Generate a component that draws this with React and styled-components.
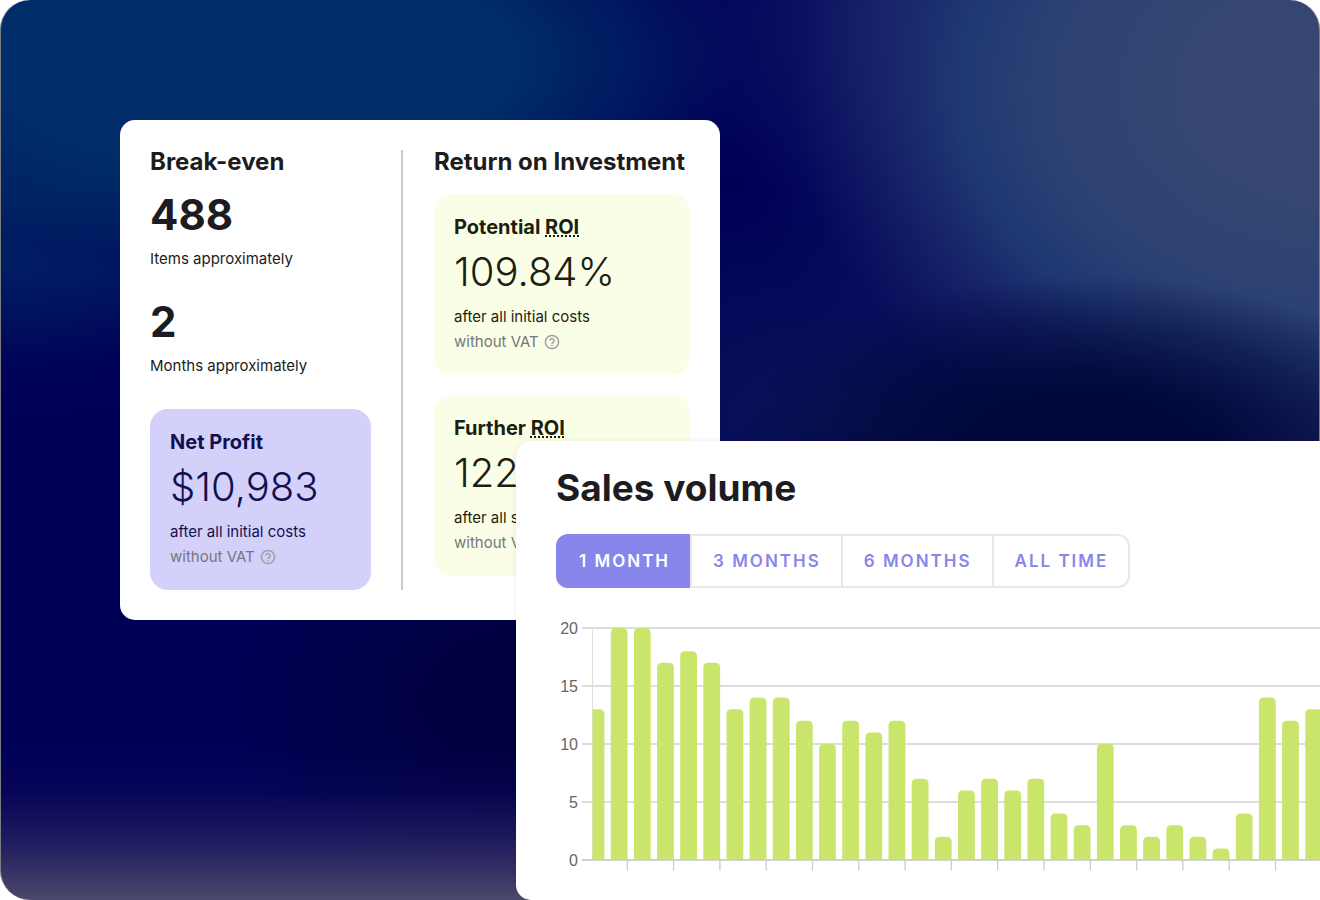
import React, { useState } from 'react'
import styled, { createGlobalStyle } from 'styled-components'

const GlobalStyle = createGlobalStyle`
* { box-sizing: border-box; }
body {
  margin: 0;
  background: #fff;
  font-family: Inter, "Liberation Sans", sans-serif;
  color: #1c1c21;
}
h1, h2, h3, p { margin: 0; }
`

const Stage = styled.main`
display: flow-root;
min-height: 100vh;
padding-top: 120px;
overflow: hidden;
border-radius: 30px 30px 0 30px;
box-shadow: inset 1px 0 #7c7c80, inset -1px 0 #7c7c80;
background:
  radial-gradient(ellipse 360px 175px at 1090px 450px, #00083a 0%, rgba(0, 8, 58, 0.95) 35%, rgba(0, 8, 58, 0.5) 70%, rgba(0, 8, 58, 0) 100%),
  radial-gradient(ellipse 600px 450px at 1330px 90px, #374871 0%, #344671 25%, #2c4274 48%, rgba(32, 58, 115, 0.95) 62%, rgba(26, 40, 108, 0.75) 75%, rgba(12, 18, 96, 0.3) 90%, rgba(0, 0, 86, 0) 100%),
  radial-gradient(ellipse 240px 240px at 1330px 400px, rgba(58, 62, 105, 0.8) 0%, rgba(58, 62, 105, 0) 100%),
  radial-gradient(ellipse 460px 240px at 860px 420px, rgba(12, 22, 90, 0.9) 0%, rgba(12, 22, 90, 0) 100%),
  radial-gradient(ellipse 320px 300px at 900px 0, rgba(24, 36, 108, 0.8) 0%, rgba(16, 22, 100, 0.4) 45%, rgba(0, 0, 86, 0) 75%),
  radial-gradient(ellipse 560px 230px at 250px 60px, #002c69 0%, #002c69 48%, rgba(0, 34, 100, 0.75) 68%, rgba(0, 10, 90, 0.3) 88%, rgba(0, 0, 86, 0) 100%),
  radial-gradient(ellipse 500px 420px at 0 0, #002c69 0%, #002c69 46%, rgba(0, 34, 100, 0.75) 68%, rgba(0, 10, 90, 0.3) 88%, rgba(0, 0, 86, 0) 100%),
  linear-gradient(to top, #4b496b 0%, rgba(60, 57, 102, 0.9) 3%, rgba(40, 36, 98, 0.7) 7%, rgba(20, 16, 92, 0.3) 12%, rgba(0, 0, 86, 0) 17%),
  radial-gradient(ellipse 320px 200px at 540px 700px, #00003c 0%, rgba(0, 0, 60, 0.8) 35%, rgba(0, 0, 60, 0) 100%),
  #000056;
`

const StatsCard = styled.section`
display: flex;
width: 600px;
margin-left: 120px;
padding: 30px;
border-radius: 15px;
background: #fff;
`

const StatsColumn = styled.div`
display: flex;
flex-direction: column;
flex: ${({ $grow }) => $grow} 1 0;
min-width: 0;
`

const Divider = styled.div`
width: 2px;
margin: 0 31px 0 30px;
background: #cbcbcb;
`

const ColumnTitle = styled.h2`
font-size: 24px;
font-weight: 700;
line-height: 24px;
white-space: nowrap;
`

const Figure = styled.p`
margin-top: ${({ $top }) => $top};
font-size: 42px;
font-weight: 700;
line-height: 50px;
`

const Caption = styled.p`
margin-top: 8px;
font-size: 15px;
line-height: 22px;
`

const Tile = styled.article`
margin-top: ${({ $top }) => $top};
padding: 21px 20px;
border-radius: 18px;
background: ${({ $bg }) => $bg};
color: ${({ $color }) => $color};
`

const TileTitle = styled.h3`
font-size: 20px;
font-weight: 700;
line-height: 24px;

abbr {
  text-decoration: underline dotted 2px;
  text-underline-offset: 1px;
  text-decoration-skip-ink: none;
}
`

const TileFigure = styled.p`
margin-top: 8px;
font-size: 40px;
font-weight: 300;
line-height: 50px;
`

const TileNote = styled.p`
margin-top: ${({ $top }) => $top};
display: flex;
align-items: center;
gap: 5px;
font-size: 15px;
line-height: 25px;
white-space: nowrap;
color: ${({ $muted }) => ($muted ? '#77777c' : 'inherit')};
`

const SalesCard = styled.section`
position: relative;
margin: -179px 0 0 516px;
padding: 24px 0 20px 40px;
border-radius: 15px 0 0 15px;
background: #fff;
box-shadow: 0 0 6px rgba(0, 0, 0, 0.08);
`

const SalesTitle = styled.h1`
font-size: 37px;
font-weight: 700;
line-height: 46px;
`

const Tabs = styled.div`
display: flex;
width: fit-content;
margin-top: 23px;
`

const Tab = styled.button`
height: 54px;
padding: 0 20px 0 21px;
border: 2px solid ${({ $active }) => ($active ? '#8886ea' : '#e8e8e8')};
background: ${({ $active }) => ($active ? '#8886ea' : '#fff')};
color: ${({ $active }) => ($active ? '#fff' : '#8886ea')};
font-family: inherit;
font-size: 17px;
font-weight: 600;
letter-spacing: 2px;
cursor: pointer;

&:first-child { border-radius: 12px 0 0 12px; }
&:last-child { border-radius: 0 12px 12px 0; }
& + & { margin-left: -2px; }
`

const ChartArea = styled.svg`
display: block;
width: 100%;
height: 264px;
margin-top: 28px;

text {
  font-family: "Liberation Sans", sans-serif;
  font-size: 16px;
  fill: #666;
}
`

const HelpIcon = () => (
  <svg width='16' height='16' viewBox='0 0 16 16' fill='none' stroke='#a0a0a0' strokeWidth='1.5' aria-hidden='true'>
    <circle cx='8' cy='8' r='6.6' />
    <path d='M5.9 6.6a2.1 2.1 0 1 1 3.2 1.8c-.7.4-1.1.8-1.1 1.5' />
    <path d='M8 10.8v1.4' />
  </svg>
)

const sales = [
  13, 20, 20, 17, 18, 17, 13, 14, 14, 12, 10, 12, 11, 12, 7, 2,
  6, 7, 6, 7, 4, 3, 10, 3, 2, 3, 2, 1, 4, 14, 12, 13,
]
const levels = [20, 15, 10, 5, 0]
const periods = ['1 MONTH', '3 MONTHS', '6 MONTHS', 'ALL TIME']

const PITCH = 23.15
const BASE = 244
const UNIT = 11.6

const barPath = (value, i) => {
  const x = 31.6 + i * PITCH
  const y = BASE - value * UNIT
  return `M${x} ${BASE}V${y + 5}q0 -5 5 -5h6.8q5 0 5 5V${BASE}z`
}

const SalesChart = () => (
  <ChartArea role='img' aria-label='Sales volume'>
    <defs>
      <clipPath id='plot'>
        <rect x='36.5' y='0' width='2000' height='264' />
      </clipPath>
    </defs>
    {levels.map((level) => {
      const y = BASE - level * UNIT
      return (
        <g key={level}>
          <text x='22' y={y + 6} textAnchor='end'>{level}</text>
          <line x1='26' x2='100%' y1={y} y2={y} stroke='#d2d2d2' strokeWidth='1.5' />
        </g>
      )
    })}
    <line x1='36.5' x2='36.5' y1='12' y2={BASE} stroke='#dedede' />
    <g clipPath='url(#plot)' fill='#cae56c'>
      {sales.map((value, i) => <path key={i} d={barPath(value, i)} />)}
    </g>
    <line x1='26' x2='100%' y1={BASE} y2={BASE} stroke='#cccccc' strokeWidth='1.5' />
    {sales.filter((_, i) => i % 2 === 0).map((_, i) => (
      <line key={i} x1={71.3 + i * PITCH * 2} x2={71.3 + i * PITCH * 2} y1={BASE} y2={BASE + 10.5} stroke='#cccccc' strokeWidth='1.3' />
    ))}
  </ChartArea>
)

const ResultTile = ({ title, abbr, value, note, ...colors }) => (
  <Tile {...colors}>
    <TileTitle>{title}{abbr && <> <abbr title='Return on Investment'>{abbr}</abbr></>}</TileTitle>
    <TileFigure>{value}</TileFigure>
    <TileNote $top='7px'>{note}</TileNote>
    <TileNote $top='0' $muted>without VAT <HelpIcon /></TileNote>
  </Tile>
)

const App = () => {
  const [period, setPeriod] = useState(periods[0])

  return (
    <>
      <GlobalStyle />
      <Stage>
        <StatsCard>
          <StatsColumn $grow={221}>
            <ColumnTitle>Break-even</ColumnTitle>
            <Figure $top='16px'>488</Figure>
            <Caption>Items approximately</Caption>
            <Figure $top='27px'>2</Figure>
            <Caption>Months approximately</Caption>
            <ResultTile title='Net Profit' value='$10,983' note='after all initial costs' $top='32px' $bg='#d3d0fa' $color='#141050' />
          </StatsColumn>
          <Divider />
          <StatsColumn $grow={256}>
            <ColumnTitle>Return on Investment</ColumnTitle>
            <ResultTile title='Potential' abbr='ROI' value='109.84%' note='after all initial costs' $top='20px' $bg='#fafee6' $color='#1c1f10' />
            <ResultTile title='Further' abbr='ROI' value='122' note='after all s' $top='20px' $bg='#fafee6' $color='#1c1f10' />
          </StatsColumn>
        </StatsCard>

        <SalesCard>
          <SalesTitle>Sales volume</SalesTitle>
          <Tabs>
            {periods.map((name) => (
              <Tab key={name} type='button' $active={name === period} aria-pressed={name === period} onClick={() => setPeriod(name)}>
                {name}
              </Tab>
            ))}
          </Tabs>
          <SalesChart />
        </SalesCard>
      </Stage>
    </>
  )
}

export default App
